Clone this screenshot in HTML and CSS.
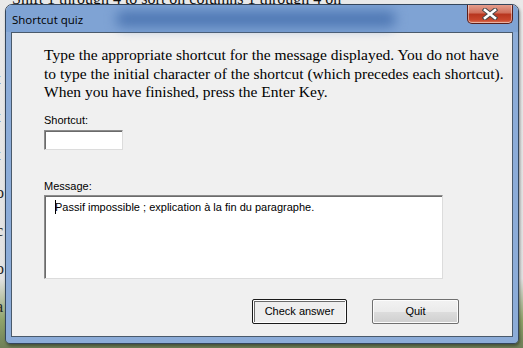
FILE: index.html
```html
<!DOCTYPE html>
<html>
<head>
    <title>Shortcut quiz</title>
    <link rel="stylesheet" href="styles.css">
</head>
<body>
    <div class="desk">
        <div class="desk-text">Shift 1 through 4 to sort on columns 1 through 4 on</div>
        <div class="desk-side">t<br>t<br>t<br>o<br>c<br>o<br>a</div>

        <div class="window">
            <div class="titlebar">
                <span class="title">Shortcut quiz</span>
                <span class="title-blur"></span>
                <button class="close-button">
                    <svg width="16" height="12" viewBox="0 0 16 12">
                        <path d="M3 2 L13 10 M13 2 L3 10" stroke="#4a4a4a" stroke-width="4.6" stroke-linecap="square"/>
                        <path d="M3 2 L13 10 M13 2 L3 10" stroke="#ffffff" stroke-width="2.6" stroke-linecap="square"/>
                    </svg>
                </button>
            </div>
            <div class="frame-body">
                <div class="client">
                    <p class="intro">Type the appropriate shortcut for the message displayed. You do not have<br>to type the initial character of the shortcut (which precedes each shortcut).<br>When you have finished, press the Enter Key.</p>

                    <label class="field-label">Shortcut:</label>
                    <div class="shortcut-box"></div>

                    <label class="field-label message-label">Message:</label>
                    <div class="message-box"><span class="caret"></span>Passif impossible ; explication à la fin du paragraphe.</div>

                    <div class="buttons">
                        <button class="win-button default">Check answer</button>
                        <button class="win-button">Quit</button>
                    </div>
                </div>
            </div>
        </div>
    </div>
</body>
</html>
```

FILE: styles.css
```css
body {
    margin: 0;
    font-family: "Liberation Sans", Arial, sans-serif;
}
.desk {
    position: relative;
    width: 523px;
    height: 348px;
    overflow: hidden;
    background: linear-gradient(to bottom, #e9e9e9 0%, #e2e2e2 80%, #8fa36a 92%, #6f7f58 100%);
}
.desk-text {
    font-family: "Liberation Serif", "Times New Roman", serif;
    font-size: 16px;
    line-height: 18px;
    color: #111;
    white-space: nowrap;
    margin-top: -10px;
    padding-left: 12px;
}
.desk-side {
    position: absolute;
    left: -4px;
    top: 60px;
    font-family: "Liberation Serif", serif;
    font-size: 16px;
    line-height: 38px;
    color: #222;
}
.window {
    position: absolute;
    left: 5px;
    top: 4px;
    width: 514px;
    height: 340px;
    box-sizing: border-box;
    border: 1px solid #34465c;
    border-radius: 7px 7px 5px 5px;
    overflow: hidden;
    box-shadow: 1px 2px 3px rgba(0, 0, 0, 0.4);
    display: flex;
    flex-direction: column;
}
.titlebar {
    position: relative;
    height: 27px;
    flex-shrink: 0;
    display: flex;
    align-items: flex-start;
    justify-content: space-between;
    padding: 0 5px 0 6px;
    background: #7fa3d4;
}
.title-blur {
    position: absolute;
    left: 110px;
    top: 6px;
    width: 280px;
    height: 16px;
    border-radius: 8px;
    background: #4f78b4;
    filter: blur(6px);
}
.frame-body {
    flex: 1;
    padding: 0 5px 6px 5px;
    background: #8cacd8;
}
.title {
    position: relative;
    z-index: 1;
    font-family: "Open Sans", "Noto Sans", sans-serif;
    font-size: 11.5px;
    color: #000;
    margin-top: 7px;
}
.close-button {
    position: relative;
    z-index: 1;
    width: 46px;
    height: 20px;
    margin-top: -1px;
    border: 1px solid #5a1e1a;
    border-top: none;
    border-radius: 0 0 5px 5px;
    background: linear-gradient(to bottom, #e8a493 0%, #d0705c 45%, #b8361f 55%, #c9472c 85%, #dd7a5e 100%);
    box-shadow: 0 0 0 1px rgba(255, 255, 255, 0.45) inset;
    display: flex;
    align-items: center;
    justify-content: center;
    padding: 0;
}
.client {
    width: 502px;
    height: 305px;
    box-sizing: border-box;
    border: 1px solid #4a5a6c;
    background-color: #f0f0f0;
    padding: 0 0 0 32px;
    display: flex;
    flex-direction: column;
    align-items: flex-start;
}
.intro {
    margin: 13px 0 0 0;
    font-family: "Liberation Serif", "Times New Roman", serif;
    font-size: 15.5px;
    line-height: 18.5px;
    color: #000;
    white-space: nowrap;
}
.field-label {
    font-family: "Liberation Sans", Tahoma, sans-serif;
    font-size: 11px;
    color: #000;
    margin-top: 11px;
    height: 14px;
    line-height: 14px;
}
.message-label {
    margin-top: 29px;
}
.shortcut-box {
    width: 79px;
    height: 20px;
    box-sizing: border-box;
    margin-top: 3px;
    background-color: #fff;
    border: 1px solid #dcdcdc;
    border-top-color: #8c8c8c;
    border-left-color: #8c8c8c;
    box-shadow: 1px 1px 0 #6b6b6b inset;
}
.message-box {
    width: 399px;
    height: 84px;
    box-sizing: border-box;
    margin-top: 2px;
    padding: 4px 0 0 10px;
    background-color: #fff;
    border: 1px solid #dcdcdc;
    border-top-color: #8c8c8c;
    border-left-color: #8c8c8c;
    box-shadow: 1px 1px 0 #6b6b6b inset;
    font-family: "Liberation Sans", Tahoma, sans-serif;
    font-size: 11px;
    line-height: 14px;
    color: #000;
    white-space: nowrap;
}
.caret {
    display: inline-block;
    width: 1px;
    height: 14px;
    background-color: #000;
    vertical-align: -3px;
    margin-right: -1px;
}
.buttons {
    display: flex;
    gap: 25px;
    margin-top: 20px;
    margin-left: 208px;
}
.win-button {
    height: 25px;
    box-sizing: border-box;
    padding: 0;
    font-family: "Liberation Sans", Tahoma, sans-serif;
    font-size: 11px;
    color: #000;
    background: linear-gradient(to bottom, #f2f2f2 0%, #ebebeb 50%, #dddddd 51%, #cfcfcf 100%);
    border: 1px solid #707070;
    border-radius: 2px;
    box-shadow: 0 0 0 1px #fcfcfc inset;
    width: 87px;
}
.win-button.default {
    width: 95px;
    border-color: #1a1a1a;
    background: #eeeeee;
    box-shadow: 0 0 0 1px #ffffff inset, 1px 1px 0 1px #6a6a6a inset;
}
```
